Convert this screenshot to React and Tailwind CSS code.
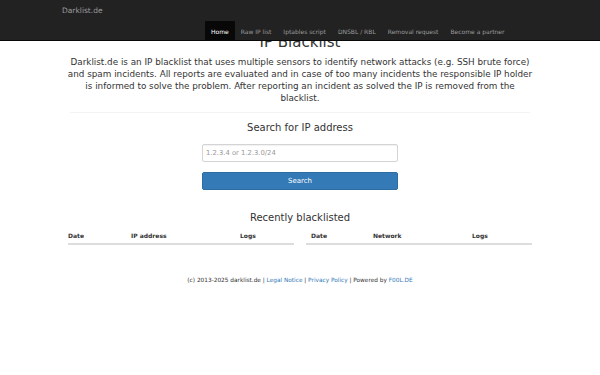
export default function App() {
  const font = { fontFamily: '"DejaVu Sans", Verdana, sans-serif' };
  const navItems = ['Home', 'Raw IP list', 'Iptables script', 'DNSBL / RBL', 'Removal request', 'Become a partner'];

  return (
    <div className="min-h-[375px] bg-white text-[#333]" style={font}>
      {/* Navbar */}
      <div className="fixed top-0 left-0 right-0 z-10 h-[41px] bg-[#222] border-b border-[#080808]">
        <div className="w-[476px] mx-auto">
          <div className="h-[21px] flex items-center text-[7.5px] text-[#9d9d9d]">Darklist.de</div>
          <ul className="flex h-[20px] pl-[143px]">
            {navItems.map((item, i) => (
              <li
                key={item}
                className={`flex items-center px-[6px] text-[6px] ${
                  i === 0 ? 'bg-[#080808] text-white' : 'text-[#9d9d9d]'
                }`}
              >
                {item}
              </li>
            ))}
          </ul>
        </div>
      </div>

      <div className="w-[476px] mx-auto pt-[33px] text-center">
        <h1 className="text-[15px] leading-[18px]">IP Blacklist</h1>
        <p className="mt-[5px] text-[8.8px] leading-[12px] px-[5px]">
          Darklist.de is an IP blacklist that uses multiple sensors to identify network attacks (e.g. SSH brute force)
          and spam incidents. All reports are evaluated and in case of too many incidents the responsible IP holder
          is informed to solve the problem. After reporting an incident as solved the IP is removed from the
          blacklist.
        </p>
        <hr className="mt-[8px] mx-[8px] border-t border-[#f3f3f3]" />

        <h3 className="mt-[8px] text-[10px] leading-[14px]">Search for IP address</h3>
        <div className="w-[196px] mx-auto mt-[3px]">
          <input
            className="w-full h-[18px] px-[3px] border border-[#d4d4d4] rounded-[2px] shadow-[inset_0_1px_1px_rgba(0,0,0,0.06)] text-[6.8px] text-[#555] placeholder:text-[#999] outline-none"
            style={font}
            placeholder="1.2.3.4 or 1.2.3.0/24"
          />
          <button
            className="mt-[10px] w-full h-[18px] bg-[#337ab7] border border-[#2e6da4] rounded-[2px] text-white text-[7px]"
            style={font}
          >
            Search
          </button>
        </div>

        <h3 className="mt-[21px] text-[10px] leading-[14px]">Recently blacklisted</h3>
        <div className="grid grid-cols-2 mt-[3px]">
          <div className="px-[6px]">
            <table className="w-full text-left text-[6px] font-bold">
              <thead>
                <tr className="border-b-2 border-[#ddd]">
                  <th className="w-[63px] py-[3px]">Date</th>
                  <th className="w-[109px] py-[3px]">IP address</th>
                  <th className="py-[3px]">Logs</th>
                </tr>
              </thead>
            </table>
          </div>
          <div className="px-[6px]">
            <table className="w-full text-left text-[6px] font-bold">
              <thead>
                <tr className="border-b-2 border-[#ddd]">
                  <th className="w-[67px] py-[3px] pl-[5px]">Date</th>
                  <th className="w-[99px] py-[3px]">Network</th>
                  <th className="py-[3px]">Logs</th>
                </tr>
              </thead>
            </table>
          </div>
        </div>

        <p className="mt-[31px] text-[5.8px]">
          (c) 2013-2025 darklist.de | <span className="text-[#337ab7]">Legal Notice</span> |{' '}
          <span className="text-[#337ab7]">Privacy Policy</span> | Powered by{' '}
          <span className="text-[#337ab7]">F00L.DE</span>
        </p>
      </div>
    </div>
  );
}
